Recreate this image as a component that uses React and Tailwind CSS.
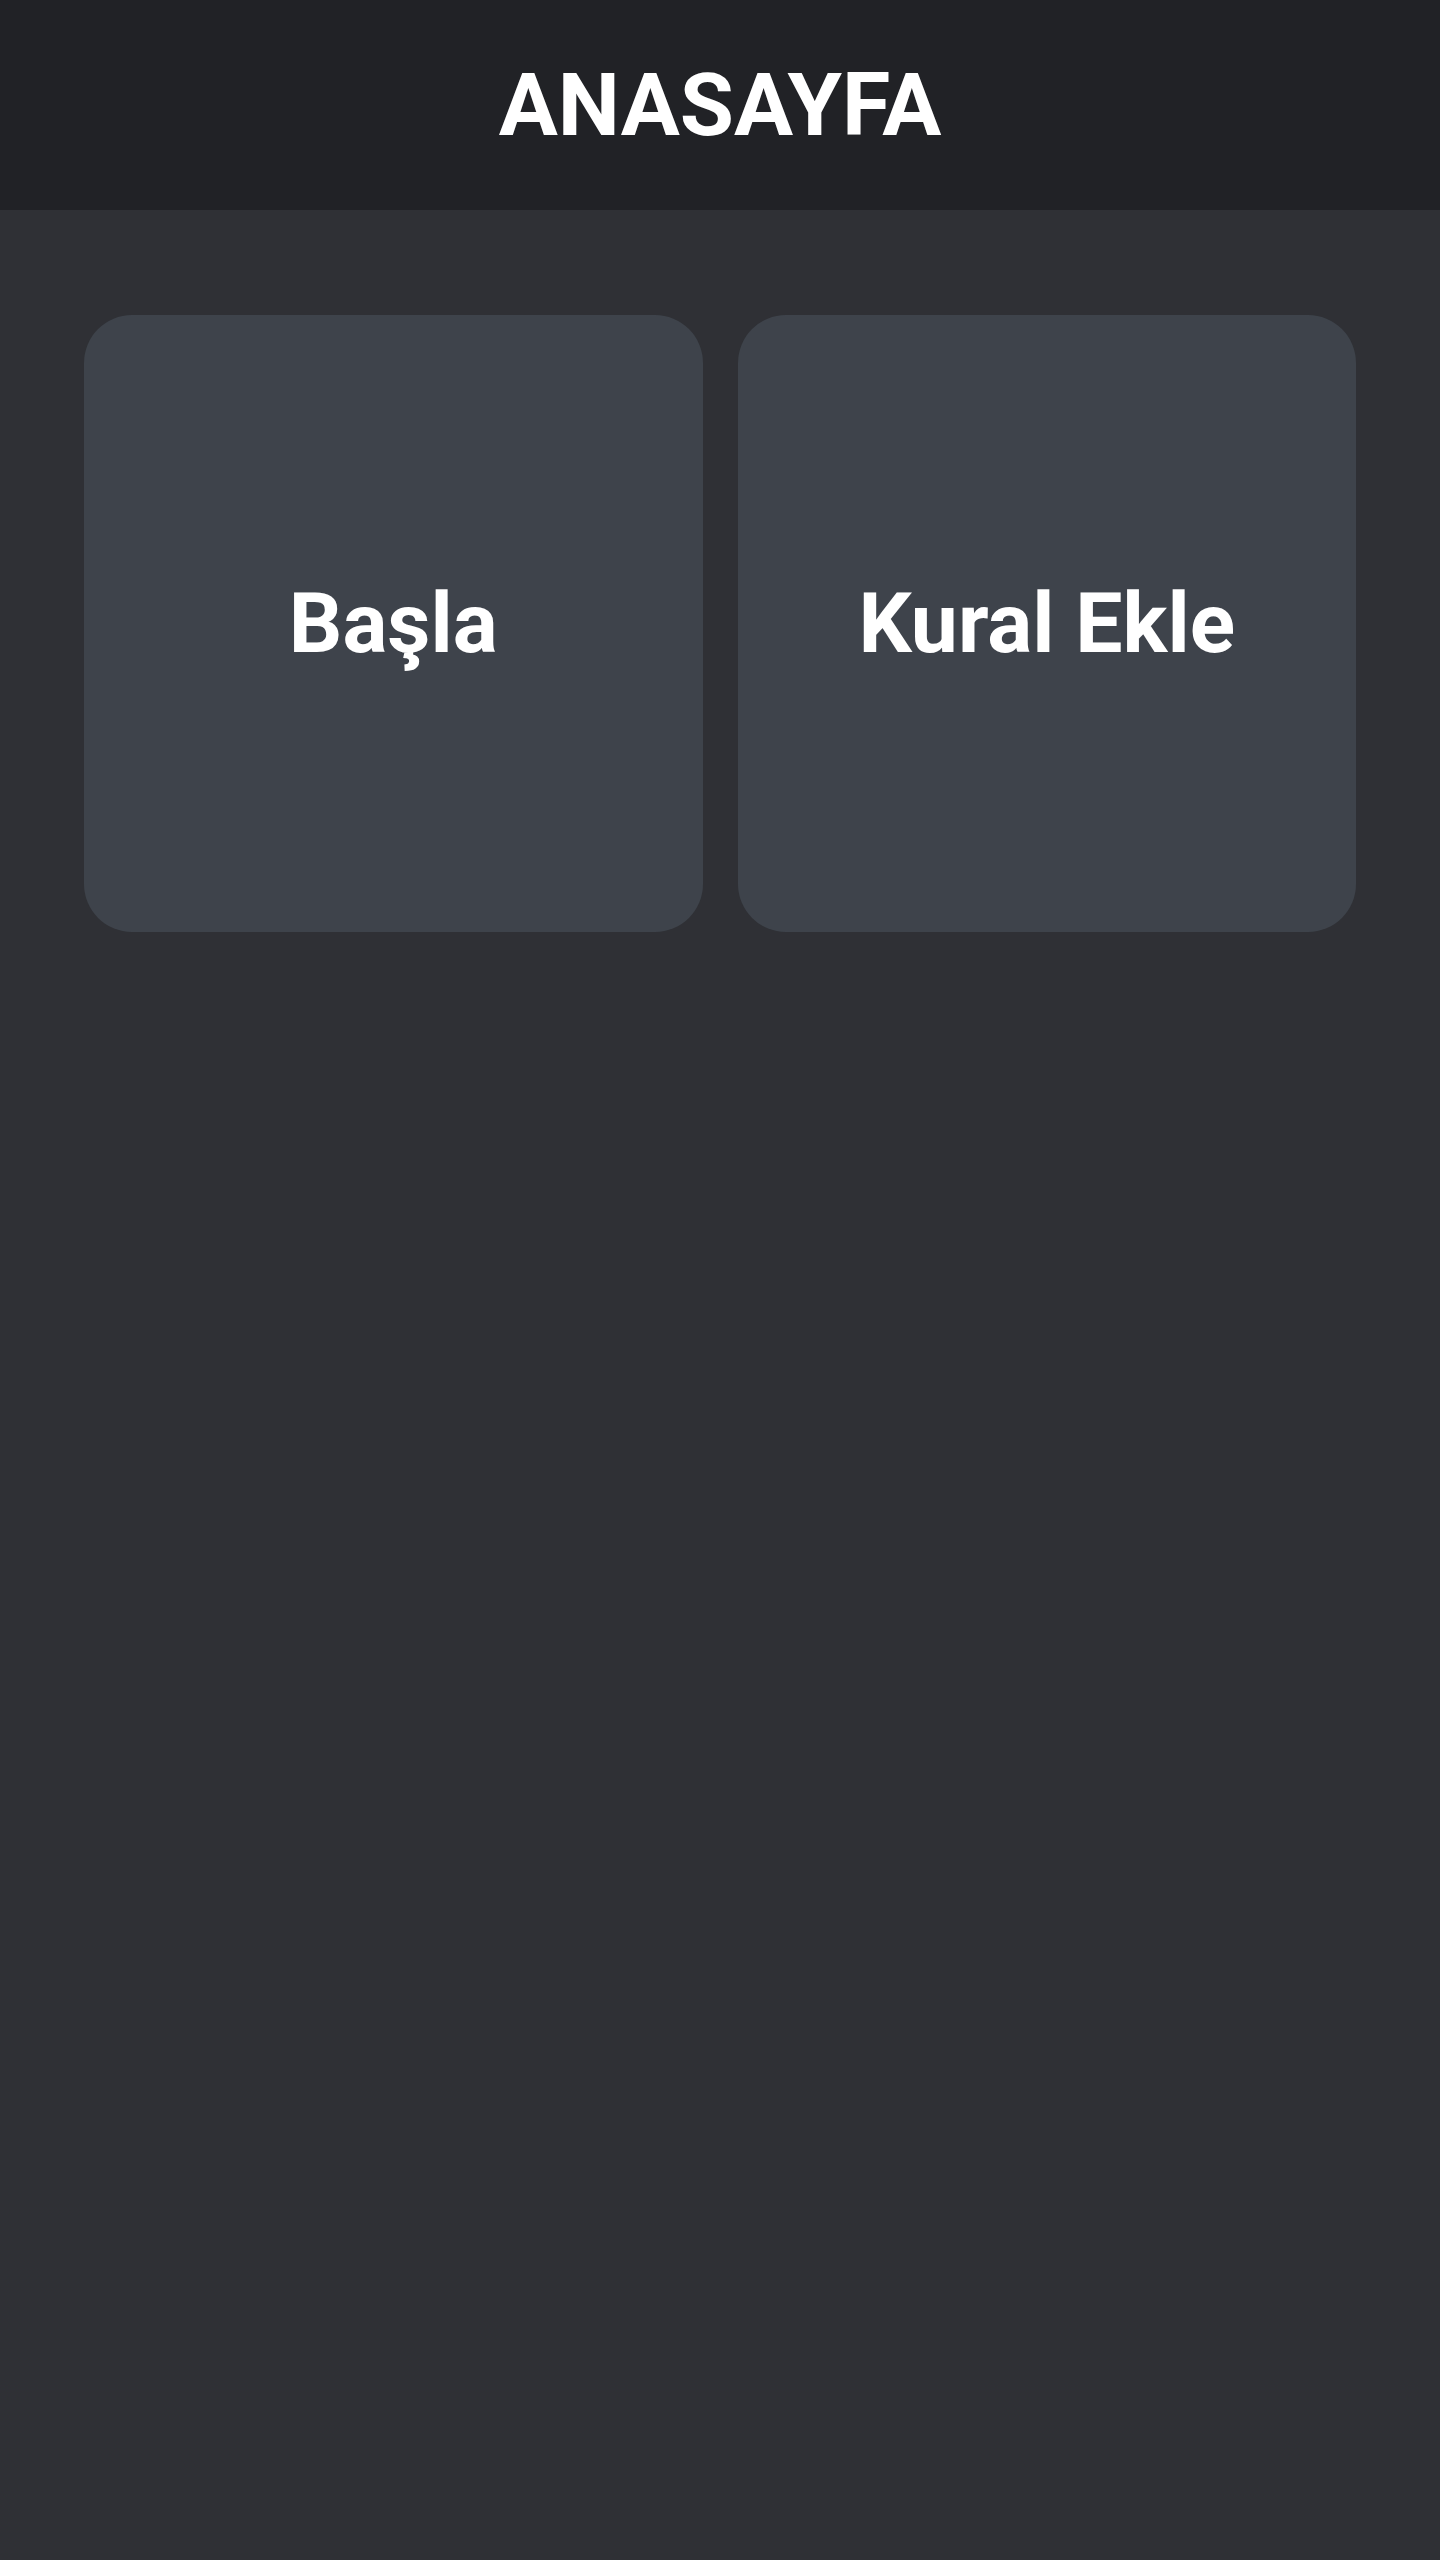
export default function App() {
  return (
    <div className="min-h-[2560px] bg-[#2f3035]">
      <header className="h-[210px] bg-[#212226] flex items-center justify-center">
        <h1
          className="text-white font-bold text-[88px] leading-none"
          style={{ fontFamily: 'Roboto, "Noto Sans", sans-serif' }}
        >
          ANASAYFA
        </h1>
      </header>
      <main className="px-[84px] pt-[105px] grid grid-cols-2 gap-[35px]">
        {["Başla", "Kural Ekle"].map((label) => (
          <button
            key={label}
            className="h-[617px] rounded-[48px] bg-[#3e434b] flex items-center justify-center text-white font-bold text-[84px]"
            style={{ fontFamily: 'Roboto, "Noto Sans", sans-serif' }}
          >
            {label}
          </button>
        ))}
      </main>
    </div>
  );
}
